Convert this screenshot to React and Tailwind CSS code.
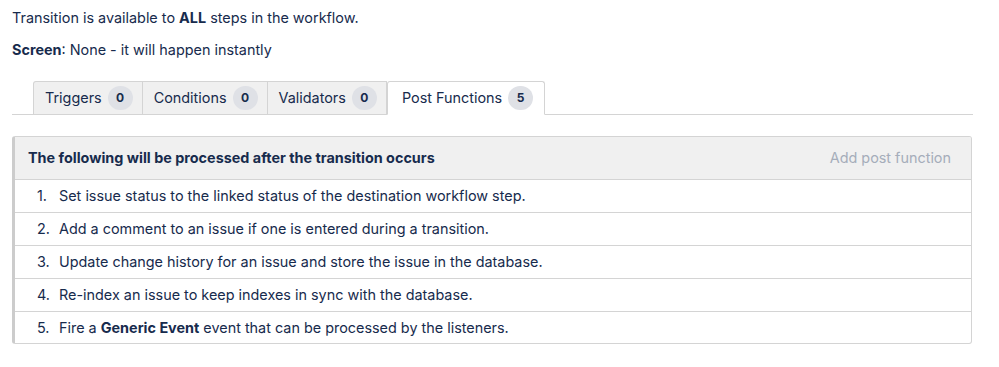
import React from 'react';

const tabs = [
  { label: 'Triggers', count: 0 },
  { label: 'Conditions', count: 0 },
  { label: 'Validators', count: 0 },
  { label: 'Post Functions', count: 5, active: true },
];

const steps = [
  'Set issue status to the linked status of the destination workflow step.',
  'Add a comment to an issue if one is entered during a transition.',
  'Update change history for an issue and store the issue in the database.',
  'Re-index an issue to keep indexes in sync with the database.',
];

export default function App() {
  return (
    <div className="w-[999px] h-[367px] bg-white text-[14.4px] text-[#172b4d] font-['Inter',sans-serif] px-[12px] pt-[8px]">
      <p className="leading-[20px]">
        Transition is available to <b>ALL</b> steps in the workflow.
      </p>
      <p className="leading-[20px] mt-[12px]">
        <b>Screen</b>: None - it will happen instantly
      </p>

      {/* Tabs */}
      <div className="mt-[21px] w-[961px] flex pl-[21px] border-b border-[#d4d4d4]">
        {tabs.map((t) => (
          <div
            key={t.label}
            className={
              t.active
                ? 'h-[34px] -mb-px flex items-center gap-[6px] pl-[14px] pr-[11px] bg-white border border-[#d4d4d4] border-b-white rounded-t-[3px]'
                : 'h-[33px] flex items-center gap-[6px] pl-[11px] pr-[9px] bg-[#f0f0f0] border border-b-0 border-[#d4d4d4] -ml-px first:ml-0 first:rounded-tl-[3px]'
            }
          >
            <span>{t.label}</span>
            <span className="h-[24px] min-w-[25px] px-[8px] rounded-full bg-[#dfe1e6] text-[12px] font-bold flex items-center justify-center">
              {t.count}
            </span>
          </div>
        ))}
      </div>

      {/* Panel */}
      <div className="mt-[21px] w-[960px] rounded-[3px] border border-[#d4d4d4] border-l-[3px] border-l-[#cccccc] overflow-hidden">
        <div className="h-[43px] bg-[#f0f0f0] flex items-center justify-between pl-[13px] pr-[20px] border-b border-[#d4d4d4]">
          <span className="font-bold">The following will be processed after the transition occurs</span>
          <span className="text-[#a5adba]">Add post function</span>
        </div>
        {steps.map((s, i) => (
          <div key={i} className="h-[33px] flex items-center border-b border-[#d4d4d4] pl-[22px]">
            <span className="w-[22px]">{i + 1}.</span>
            <span>{s}</span>
          </div>
        ))}
        <div className="h-[31px] flex items-center pl-[22px]">
          <span className="w-[22px]">5.</span>
          <span>
            Fire a <b>Generic Event</b> event that can be processed by the listeners.
          </span>
        </div>
      </div>
    </div>
  );
}
